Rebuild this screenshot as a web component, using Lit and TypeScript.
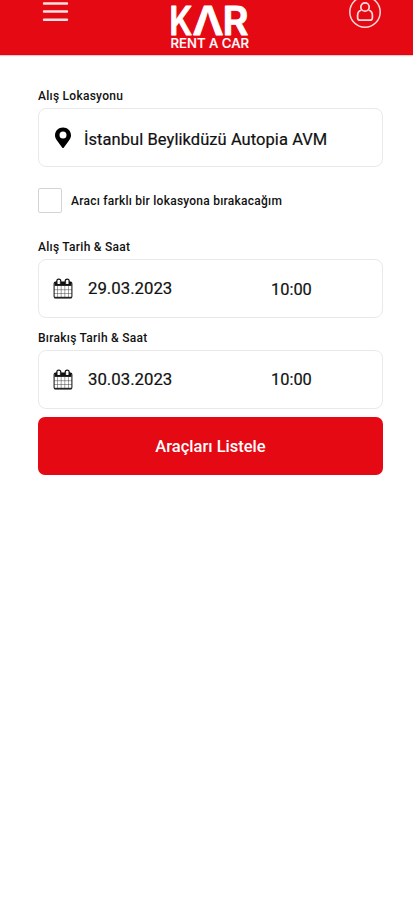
import { LitElement, html, css, svg } from "lit";
import { customElement, property } from "lit/decorators.js";

@customElement("app-header")
class AppHeader extends LitElement {
  static styles = css`
    :host { display: block; }
    header {
      box-sizing: border-box; height: 55px; padding: 0 31px 0 43px;
      display: grid; grid-template-columns: 128px 80px 1fr;
      background: #e50914; border-bottom: 1px solid #d90a14;
      box-shadow: 0 1px 1px #f5c4c6;
    }
    svg { display: block; overflow: visible; }
    .user { justify-self: end; }
    .big { font: 600 39px Inter, "Liberation Sans", sans-serif; fill: #fff; stroke: #fff; stroke-width: .9; stroke-linejoin: round; }
    .small { font: 500 13.3px Inter, "Liberation Sans", sans-serif; fill: #fff; stroke: #fff; stroke-width: .2; }
  `;
  render() {
    return html`<header>
      <svg width="26" height="24" viewBox="0 0 26 24" stroke="#fff" stroke-opacity=".88" stroke-width="2.4" stroke-linecap="round">
        <path d="M1 3.500H24M1 11.500H24M1 19.800H24" />
      </svg>
      <svg width="80" height="54" viewBox="0 0 80 54">
        <text class="big" x="-1.800" y="35.300" textLength="23" lengthAdjust="spacingAndGlyphs">K</text>
        <text class="big" x="21.500" y="35.300" textLength="31" lengthAdjust="spacingAndGlyphs">Λ</text>
        <text class="big" x="51.500" y="35.300" textLength="26" lengthAdjust="spacingAndGlyphs">R</text>
        <text class="small" x="-.5" y="48.300" textLength="78.500" lengthAdjust="spacingAndGlyphs">RENT A CAR</text>
      </svg>
      <svg class="user" width="34" height="30" viewBox="0 0 34 30" fill="none" stroke="#fff" stroke-opacity=".85">
        <circle cx="17" cy="12" r="15.200" stroke-width="1.500" />
        <circle cx="17" cy="7" r="4.200" stroke-width="1.700" />
        <path d="M13.200 10.200C11 10.900 9.600 12.800 9.600 15.200v2.500q0 2.500 2.500 2.500h9.800q2.500 0 2.500-2.500v-2.500c0-2.400-1.400-4.300-3.600-5" stroke-width="1.700" />
      </svg>
    </header>`;
  }
}

const pin = svg`<path fill="#000" fill-rule="evenodd" d="M10 .5C5.500.5 2 3.900 2 8.200c0 2 .8 3.500 2 5.200l5.100 7q.9 1.200 1.800 0l5.100-7c1.200-1.700 2-3.200 2-5.200C18 3.900 14.500.5 10 .5ZM10 4.600a3.500 3.500 0 1 1 0 7 3.500 3.500 0 0 1 0-7Z" />`;
const calendar = svg`<g fill="none" stroke="#222">
  <rect x="1.100" y="4" width="17.800" height="16" rx="1.500" stroke-width="1.100" />
  <path d="M1.500 5.900H18.500" stroke="#111" stroke-width="4" />
  <path d="M1 19.500H19" stroke-width="1.400" />
  <path d="M1 11.700H19M1 15.500H19M4.500 8V19.500M8.200 8V19.500M11.800 8V19.500M15.500 8V19.500" stroke-width=".7" stroke-opacity=".6" />
  <path d="M3.800 5V3.200a2 2 0 0 1 4 0V5M12.200 5V3.200a2 2 0 0 1 4 0V5" stroke="#111" stroke-width="1.200" />
  <path d="M4.800 6V3.800a1 1 0 0 1 2 0V6M13.200 6V3.800a1 1 0 0 1 2 0V6" fill="#fff" stroke="#fff" stroke-width=".5" />
</g>`;

@customElement("form-field")
class FormField extends LitElement {
  @property() label = "";
  @property() value = "";
  @property() time = "";
  @property() icon = "calendar";
  static styles = css`
    :host { display: block; font-family: Roboto, "Liberation Sans", sans-serif; color: #111; }
    .label { height: 16px; margin-bottom: 4px; font-size: 12px; font-weight: 500; line-height: 16px; letter-spacing: .26px; white-space: nowrap; }
    .box {
      box-sizing: border-box; height: 59px; padding: 0 14px;
      border: 1px solid #e9e9e9; border-radius: 8px; background: #fff;
      display: grid; grid-template-columns: 20px 1fr; align-items: center;
      font-size: 17px; line-height: 20px; white-space: nowrap;
    }
    .box.dated { grid-template-columns: 20px 198px 1fr; }
    svg { display: block; }
    .place { padding: 5px 0 0 11px; font-size: 16.5px; letter-spacing: .06px; -webkit-text-stroke: .2px #111; }
    .date { padding: 0 0 2px 15px; font-size: 16.8px; -webkit-text-stroke: .2px #111; }
    .time { padding-top: 2px; font-size: 16.4px; -webkit-text-stroke: .2px #111; }
    :host(.second) .time { padding-top: 1px; }
  `;
  render() {
    return html`<div class="label">${this.label}</div>
      <div class="box ${this.time ? "dated" : ""}">
        <svg width="20" height="22" viewBox="0 0 20 22">${this.icon === "pin" ? pin : calendar}</svg>
        <span class=${this.time ? "date" : "place"}>${this.value}</span>
        ${this.time ? html`<span class="time">${this.time}</span>` : ""}
      </div>`;
  }
}

@customElement("app-root")
class AppRoot extends LitElement {
  static styles = css`
    :host { display: block; min-height: 900px; background: #fff; font-family: Roboto, "Liberation Sans", sans-serif; color: #111; }
    main { padding: 33px 30px 0 38px; }
    .check { display: flex; align-items: center; gap: 9px; height: 25px; margin: 21px 0 26px; font-size: 12px; font-weight: 500; letter-spacing: .24px; white-space: nowrap; }
    .check i { box-sizing: border-box; width: 24px; height: 25px; border: 1px solid #d4d4d4; border-radius: 2px; }
    .second { margin-top: 12px; }
    button { display: block; width: 100%; height: 58px; margin-top: 8px; padding: 0; border: 0; border-radius: 7px; background: #e50914; color: #fff; font: 500 16.5px Roboto, "Liberation Sans", sans-serif; }
  `;
  render() {
    return html`<app-header></app-header>
      <main>
        <form-field label="Alış Lokasyonu" value="İstanbul Beylikdüzü Autopia AVM" icon="pin"></form-field>
        <label class="check"><i></i><span>Aracı farklı bir lokasyona bırakacağım</span></label>
        <form-field label="Alış Tarih &amp; Saat" value="29.03.2023" time="10:00"></form-field>
        <form-field class="second" label="Bırakış Tarih &amp; Saat" value="30.03.2023" time="10:00"></form-field>
        <button>Araçları Listele</button>
      </main>`;
  }
}
